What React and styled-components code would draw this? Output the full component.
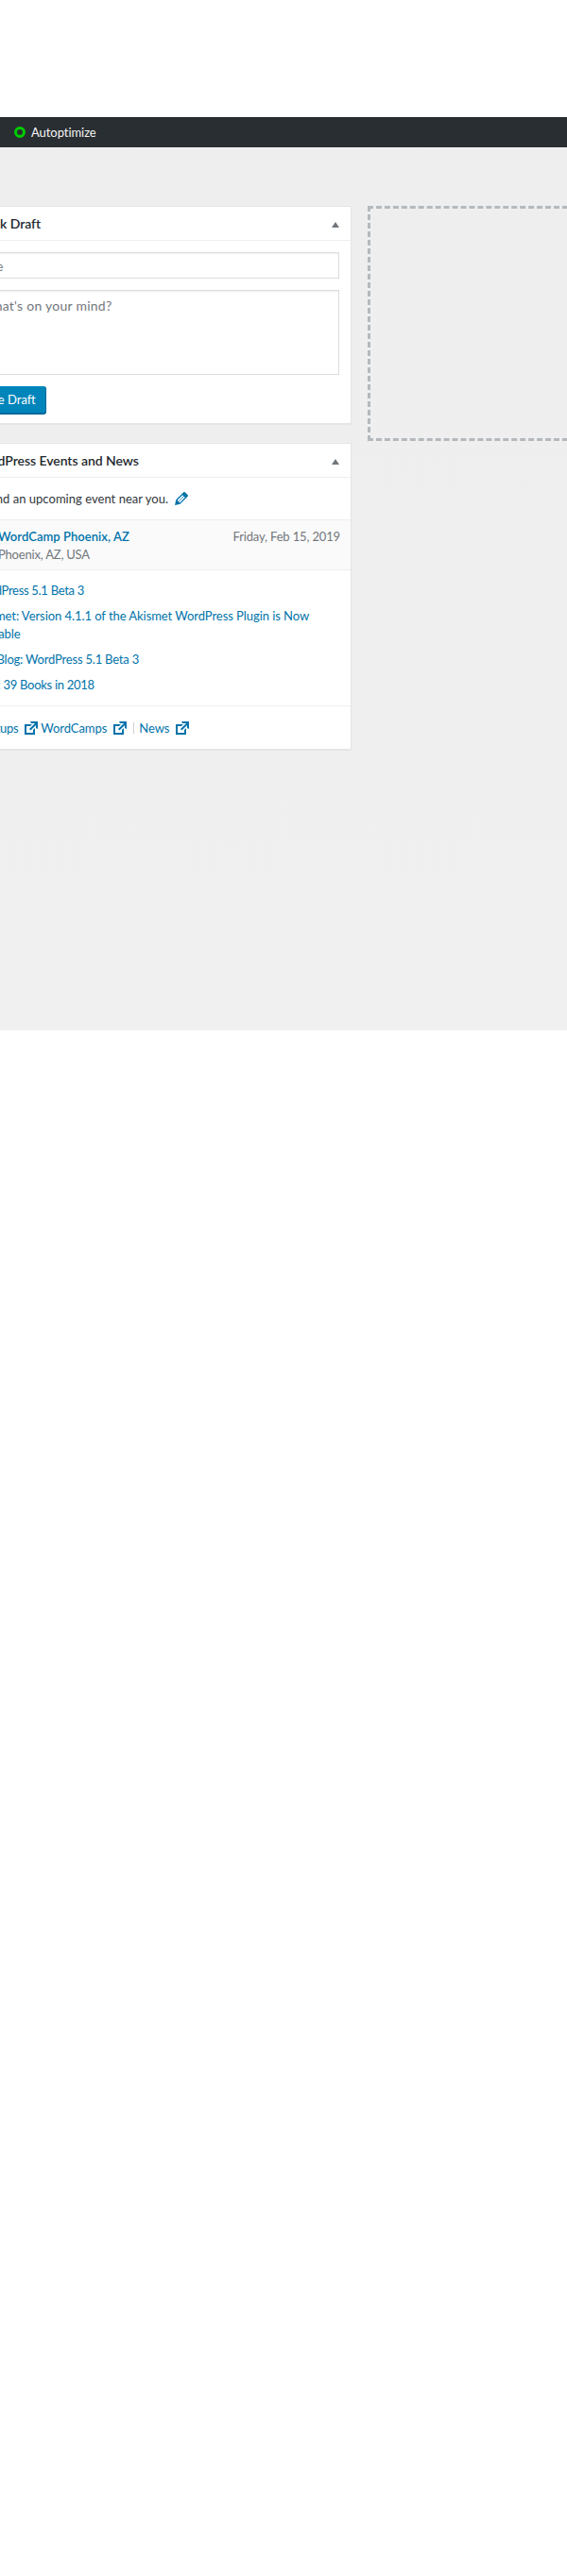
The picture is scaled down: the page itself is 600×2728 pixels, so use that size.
import React from "react";
import styled, { createGlobalStyle } from "styled-components";

const GlobalStyle = createGlobalStyle`
  html, body {
    margin: 0;
    padding: 0;
    background: #fff;
    overflow: hidden;
    font-family: Lato, "Open Sans", sans-serif;
    font-size: 13px;
    letter-spacing: -0.06px;
    color: #32373c;
  }
`;

const Page = styled.div`
  width: 600px;
  height: 2728px;
  padding-top: 124px;
  box-sizing: border-box;
  overflow: hidden;
`;

const AdminBar = styled.div`
  height: 32px;
  background: #292e32;
  display: flex;
  align-items: center;
  padding-left: 15px;
  gap: 6px;
  color: #f5f5f5;
`;

const StatusRing = styled.span`
  width: 12px;
  height: 12px;
  box-sizing: border-box;
  border: 3px solid #0c0;
  border-radius: 50%;
`;

const Content = styled.div`
  height: 935px;
  background: linear-gradient(#eeeeee, #f0f0f0);
  padding-top: 62px;
  box-sizing: border-box;
`;

const Columns = styled.div`
  display: flex;
  align-items: flex-start;
  gap: 17px;
  margin-left: -42px;
  width: 900px;
`;

const LeftColumn = styled.div`
  width: 414px;
  flex: none;
  display: flex;
  flex-direction: column;
  gap: 20px;
`;

const DropZone = styled.div`
  width: 400px;
  height: 249px;
  box-sizing: border-box;
  flex: none;
  border: 3px dashed #b4b9be;
`;

const Card = styled.section`
  background: #fff;
  border: 1px solid #e5e5e5;
  box-shadow: 0 1px 1px rgba(0, 0, 0, 0.04);
`;

const CardHeader = styled.header`
  height: 36px;
  box-sizing: border-box;
  border-bottom: 1px solid #eee;
  display: flex;
  align-items: center;
  justify-content: space-between;
  padding: 0 12px;
`;

const CardTitle = styled.h2`
  margin: 0;
  font-size: 14px;
  font-weight: 600;
  letter-spacing: -0.05px;
  color: #23282d;
`;

const Caret = styled.span`
  width: 0;
  height: 0;
  margin-top: 3px;
  border-left: 4px solid transparent;
  border-right: 4px solid transparent;
  border-bottom: 6px solid #72777c;
`;

const DraftForm = styled.form`
  display: flex;
  flex-direction: column;
  align-items: flex-start;
  padding: 12px 12px 10px;
`;

const TitleInput = styled.input`
  width: 100%;
  height: 28px;
  box-sizing: border-box;
  border: 1px solid #ddd;
  box-shadow: inset 0 1px 2px rgba(0, 0, 0, 0.07);
  padding: 0 4px;
  margin: 0 0 12px;
  font: 14px Lato, sans-serif;
  &::placeholder { color: #72777c; opacity: 1; }
`;

const DraftText = styled.textarea`
  width: 100%;
  height: 90px;
  box-sizing: border-box;
  border: 1px solid #ddd;
  box-shadow: inset 0 1px 2px rgba(0, 0, 0, 0.07);
  padding: 6px 8px;
  margin: 0 0 12px;
  resize: none;
  display: block;
  font: 14px/19px Lato, sans-serif;
  letter-spacing: 0.25px;
  &::placeholder { color: #72777c; opacity: 1; }
`;

const SaveButton = styled.button`
  height: 29px;
  box-sizing: border-box;
  padding: 0 10px 1px 6px;
  background: #0085ba;
  border: 1px solid #006799;
  border-top-color: #0085ba;
  border-radius: 3px;
  box-shadow: 0 1px 0 #006799;
  color: #fff;
  font: 13px Lato, sans-serif;
`;

const Notice = styled.div`
  height: 44px;
  box-sizing: border-box;
  display: flex;
  align-items: center;
  gap: 4px;
  padding: 0 12px;
  letter-spacing: 0.03px;
`;

const Glyph = styled.svg`
  width: 20px;
  height: 20px;
  fill: #0073aa;
  flex: none;
`;

const EventRow = styled.div`
  height: 54px;
  box-sizing: border-box;
  background: #fafafa;
  border-top: 1px solid #eee;
  border-bottom: 1px solid #eee;
  display: flex;
  justify-content: space-between;
  padding: 8px 11px 0 39px;
  line-height: 19px;
`;

const EventName = styled.a`
  display: block;
  color: #0073aa;
  font-weight: 600;
  letter-spacing: 0.05px;
`;

const EventPlace = styled.div`
  color: #72777c;
  letter-spacing: -0.2px;
`;

const EventDate = styled.div`
  color: #72777c;
  letter-spacing: -0.15px;
`;

const NewsList = styled.ul`
  list-style: none;
  margin: 0;
  padding: 12px;
  display: flex;
  flex-direction: column;
  gap: 8px;
`;

const NewsLink = styled.a`
  display: block;
  color: #0073aa;
  line-height: 19px;
  letter-spacing: ${(p) => p.$spacing}px;
`;

const Footer = styled.div`
  height: 46px;
  box-sizing: border-box;
  border-top: 1px solid #eee;
  display: flex;
  align-items: center;
  padding: 0 12px;
  color: #0073aa;
`;

const FooterLink = styled.a`
  display: flex;
  align-items: center;
  gap: 4px;
  letter-spacing: ${(p) => p.$spacing}px;
  & + &::before {
    content: "";
    width: 1px;
    height: 12px;
    background: #ccd0d4;
    margin: 0 1px 0 4px;
  }
`;

const externalPath = "M9 3h8v8l-2-1V6.92l-5.6 5.59-1.41-1.41L14.08 5H10zm3 12v-3l2-2v7H3V6h8L9 8H5v7h7z";
const editPath = "M13.89 3.39l2.71 2.72c.46.46.42 1.24.03 1.64l-8.01 8.02-5.56 1.16 1.16-5.58s7.6-7.63 7.99-8.03c.39-.39 1.22-.39 1.68.07zm-2.73 2.79l-5.59 5.61 1.11 1.11 5.54-5.65zm-2.97 8.23l5.58-5.6-1.07-1.08-5.59 5.6z";

const news = [
  { title: "WordPress 5.1 Beta 3", spacing: -0.3 },
  { title: "Akismet: Version 4.1.1 of the Akismet WordPress Plugin is Now Available", spacing: -0.06 },
  { title: "Dev Blog: WordPress 5.1 Beta 3", spacing: -0.2 },
  { title: "Matt: 39 Books in 2018", spacing: -0.28 },
];

const footerLinks = [
  { label: "Meetups", spacing: -0.3 },
  { label: "WordCamps", spacing: -0.06 },
  { label: "News", spacing: -0.06 },
];

const App = () => (
  <Page>
    <GlobalStyle />
    <AdminBar>
      <StatusRing />
      Autoptimize
    </AdminBar>
    <Content>
      <Columns>
        <LeftColumn>
          <Card>
            <CardHeader>
              <CardTitle>Quick Draft</CardTitle>
              <Caret />
            </CardHeader>
            <DraftForm>
              <TitleInput placeholder="Title" />
              <DraftText placeholder="What's on your mind?" />
              <SaveButton type="button">Save Draft</SaveButton>
            </DraftForm>
          </Card>
          <Card>
            <CardHeader>
              <CardTitle>WordPress Events and News</CardTitle>
              <Caret />
            </CardHeader>
            <Notice>
              Attend an upcoming event near you.
              <Glyph viewBox="0 0 20 20"><path d={editPath} /></Glyph>
            </Notice>
            <EventRow>
              <div>
                <EventName>WordCamp Phoenix, AZ</EventName>
                <EventPlace>Phoenix, AZ, USA</EventPlace>
              </div>
              <EventDate>Friday, Feb 15, 2019</EventDate>
            </EventRow>
            <NewsList>
              {news.map((item) => (
                <li key={item.title}><NewsLink $spacing={item.spacing}>{item.title}</NewsLink></li>
              ))}
            </NewsList>
            <Footer>
              {footerLinks.map((link) => (
                <FooterLink key={link.label} $spacing={link.spacing}>
                  {link.label}
                  <Glyph viewBox="0 0 20 20"><path d={externalPath} /></Glyph>
                </FooterLink>
              ))}
            </Footer>
          </Card>
        </LeftColumn>
        <DropZone />
      </Columns>
    </Content>
  </Page>
);

export default App;
